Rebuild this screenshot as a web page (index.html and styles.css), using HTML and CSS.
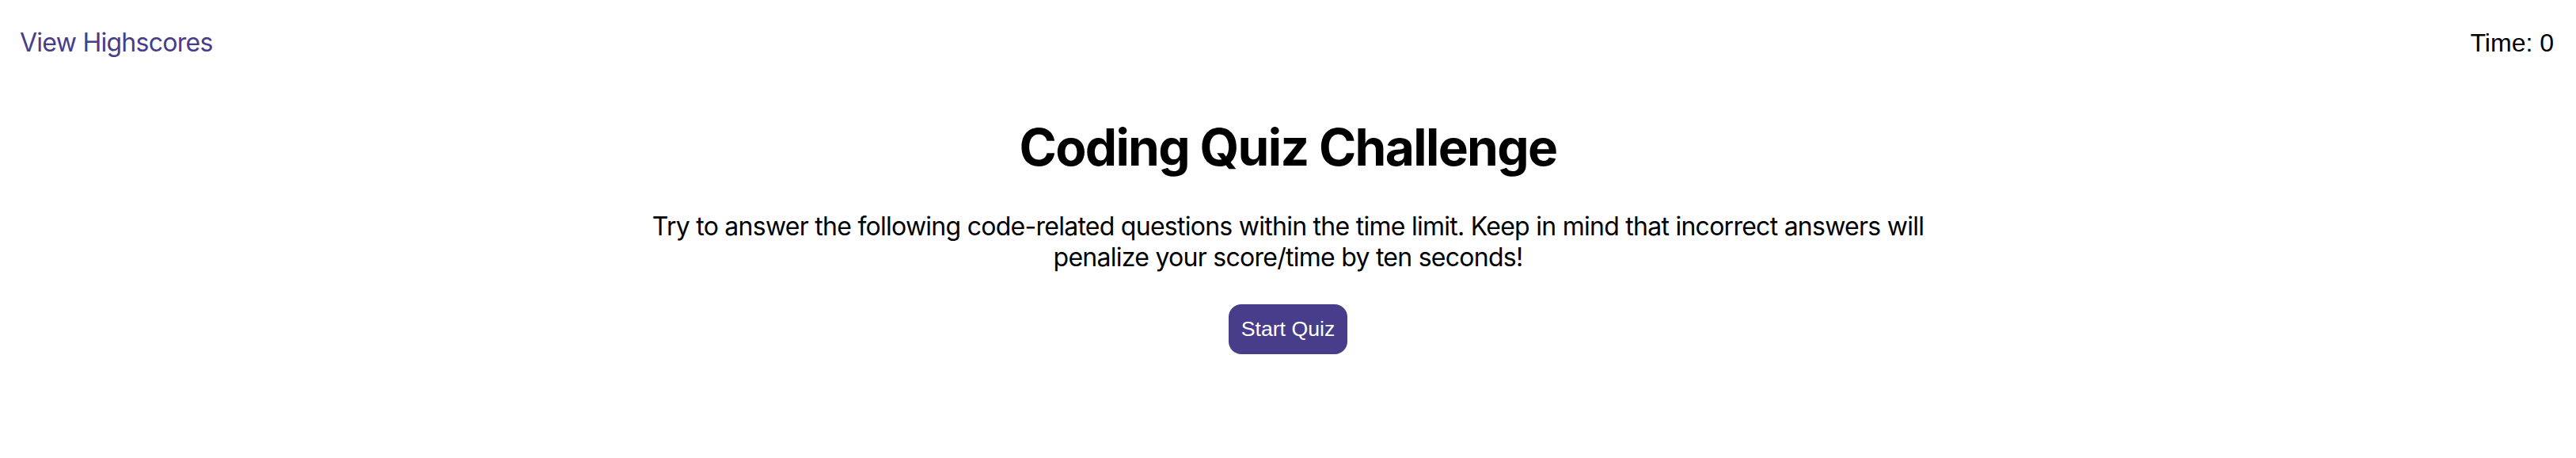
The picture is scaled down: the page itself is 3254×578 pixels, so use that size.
FILE: index.html
```html
<!DOCTYPE html>
<html lang="en">
<head>
<meta charset="utf-8">
<title>Coding Quiz Challenge</title>
<link rel="stylesheet" href="styles.css">
</head>
<body>
<header class="topbar">
  <a class="highscores-link" href="#">View Highscores</a>
  <div class="timer">Time: <span class="timer-value">0</span></div>
</header>
<main class="intro">
  <h1 class="intro-title">Coding Quiz Challenge</h1>
  <p class="intro-text">Try to answer the following code-related questions within the time limit. Keep in mind that incorrect answers will penalize your score/time by ten seconds!</p>
  <button class="start-btn" type="button">Start Quiz</button>
</main>
</body>
</html>
```
FILE: styles.css
```css
html, body {
  margin: 0;
  padding: 0;
  background: #ffffff;
}
body {
  font-family: Inter, "Noto Sans", sans-serif;
  font-size: 32px;
  color: #000000;
  letter-spacing: -0.023em;
}
.topbar {
  display: flex;
  justify-content: space-between;
  align-items: baseline;
  padding: 34px 28px 0 25px;
}
.highscores-link {
  color: #483d8b;
  text-decoration: none;
  font-size: 32px;
}
.timer {
  font-family: "Liberation Sans", Arial, sans-serif;
  font-size: 32px;
  letter-spacing: 0;
}
.intro {
  display: flex;
  flex-direction: column;
  align-items: center;
  text-align: center;
}
.intro-title {
  margin: 74px 0 0;
  font-size: 64px;
  font-weight: 700;
  line-height: normal;
  letter-spacing: -0.026em;
}
.intro-text {
  margin: 42px 0 0;
  max-width: 1640px;
  line-height: normal;
}
.start-btn {
  margin-top: 40px;
  font-family: "Liberation Sans", Arial, sans-serif;
  font-size: 26.67px;
  letter-spacing: 0;
  padding: 16px;
  border: none;
  border-radius: 16px;
  background: #483d8b;
  color: #ffffff;
  line-height: normal;
}
```
